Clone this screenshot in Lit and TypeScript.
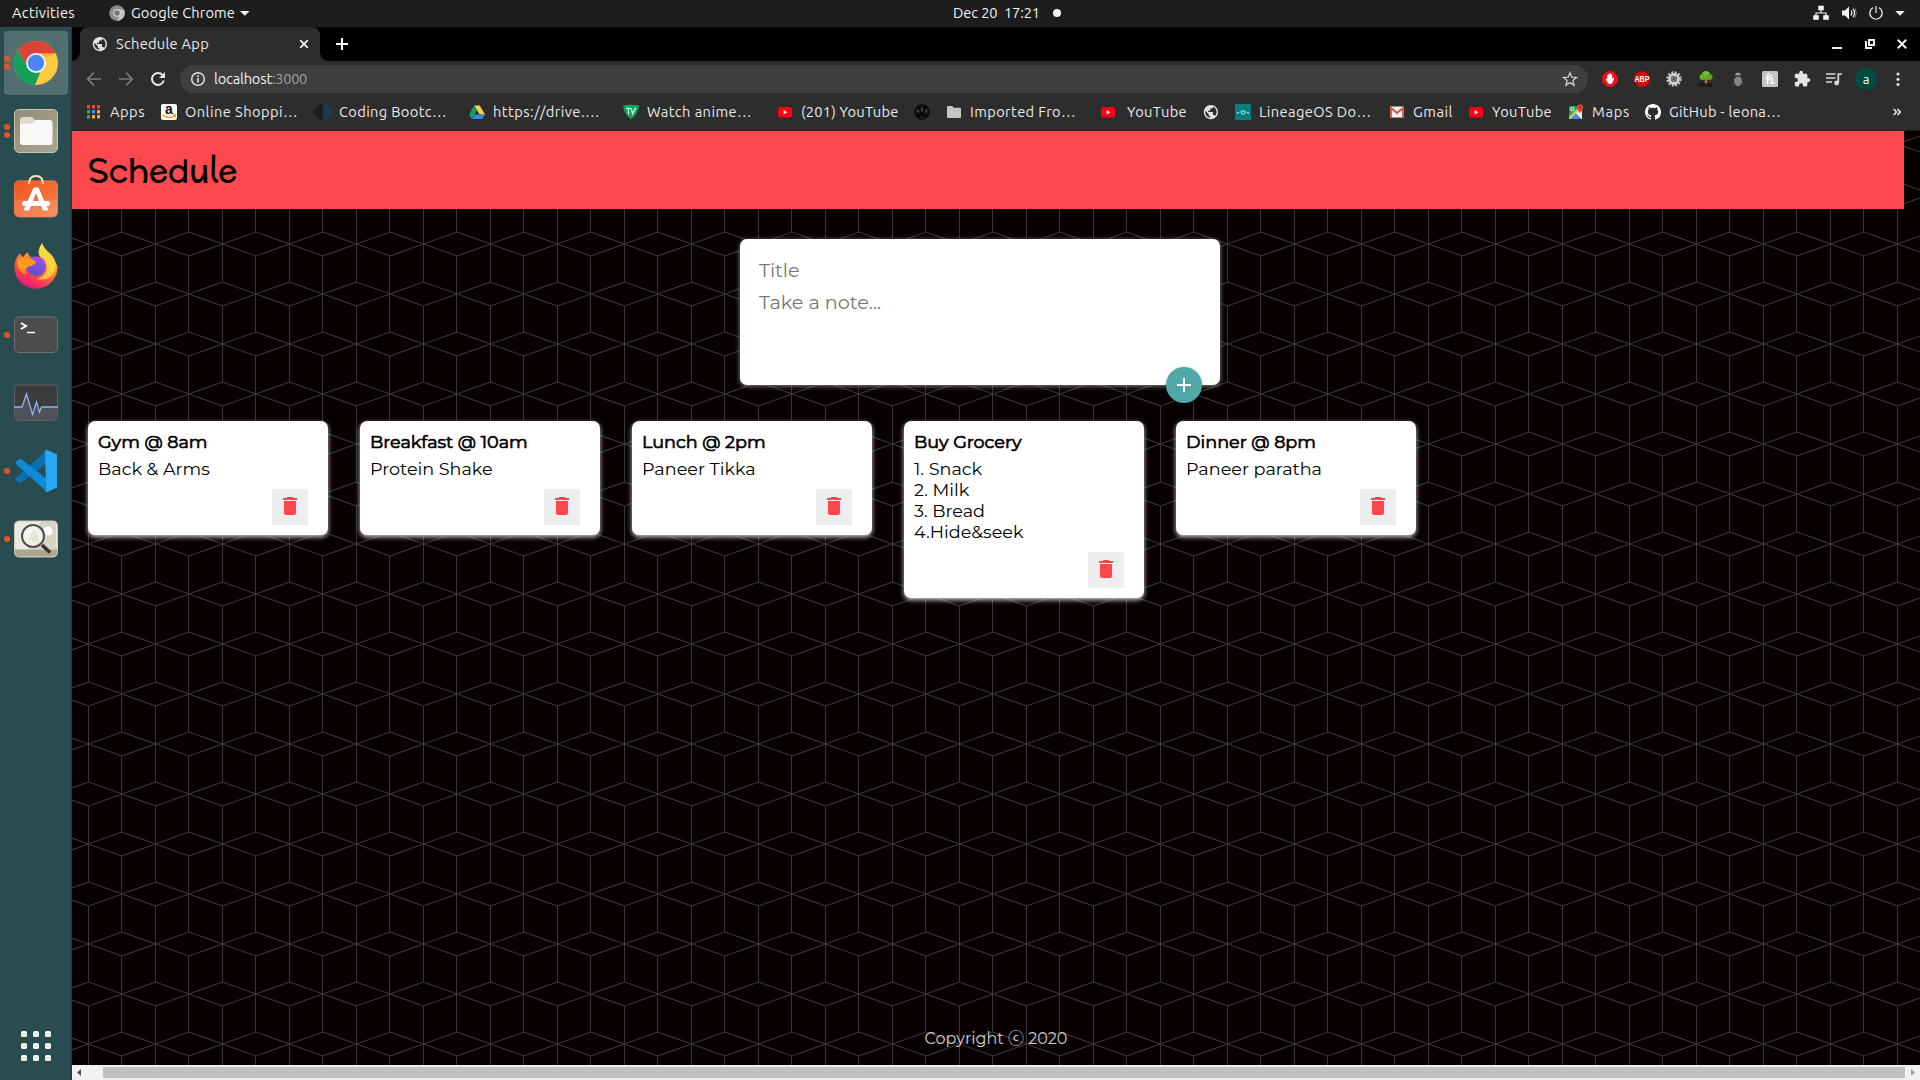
import { LitElement, html, svg, css } from "lit";
import { customElement, property, state } from "lit/decorators.js";

/** A single line of text whose tracking is adjusted to fill a given width. */
@customElement("fit-text")
class FitText extends LitElement {
  @property() text = "";
  @property({ type: Number }) w = 0;
  @state() private spacing = 0;

  static styles = css`
    :host { display: inline-block; white-space: pre; }
    .line { display: inline-block; }
  `;

  firstUpdated() {
    const line = this.renderRoot.querySelector(".line") as HTMLElement;
    const natural = line.getBoundingClientRect().width;
    if (natural && this.w) this.spacing = (this.w - natural) / this.text.length;
  }

  render() {
    return html`<span class="line" style="letter-spacing:${this.spacing}px">${this.text}</span>`;
  }
}

const fit = (text: string, w: number) => html`<fit-text .text=${text} .w=${w}></fit-text>`;

const icon = (size: number, box: string, body: unknown) =>
  html`<svg class="icon" width=${size} height=${size} viewBox=${box}>${body}</svg>`;

const GLOBE = svg`<path transform="translate(-.6 -.4) scale(.71)" fill="#e2e3e5" d="M12 2C6.480 2 2 6.480 2 12s4.480 10 10 10 10-4.480 10-10S17.520 2 12 2zm-1 17.930c-3.950-.49-7-3.850-7-7.930 0-.62.08-1.210.21-1.790L9 15v1c0 1.100.9 2 2 2v1.930zm6.900-2.540c-.26-.81-1-1.390-1.900-1.390h-1v-3c0-.55-.45-1-1-1H8v-2h2c.55 0 1-.45 1-1V7h2c1.100 0 2-.9 2-2v-.41c2.930 1.190 5 4.060 5 7.410 0 2.080-.8 3.970-2.100 5.390z"/>`;

const YT = svg`<rect x="1" y="3" width="14" height="10.500" rx="2.600" fill="#ff0018"/><path d="M6.600 6v4.400l3.700-2.200Z" fill="#fff"/>`;

const FAVICONS: Record<string, unknown> = {
  apps: svg`${[0, 1, 2].map(r => [0, 1, 2].map(c => svg`<rect x=${1 + c * 5} y=${1 + r * 5} width="3" height="3.500"
      fill=${[["#ea4335", "#ea4335", "#ea4335"], ["#34a853", "#2196f3", "#fbaa28"], ["#34a853", "#fbaa28", "#fbaa28"]][r][c]}/>`))}`,
  amazon: svg`<rect width="16" height="16" rx="2" fill="#fff"/><text x="8" y="10.300" text-anchor="middle" font-family="Liberation Sans" font-weight="700" font-size="14" fill="#111">a</text>
    <path d="M1.500 10.800c3.500 3.300 9 3.500 12 1M12 11l2.500-.3-.5 2.600" fill="none" stroke="#ff9d1e" stroke-width="1.400"/>`,
  coding: svg`<g fill="none" stroke-width="1.400"><g stroke="#171717"><path d="M8 .8a7.200 7.200 0 0 0 0 14.400M8 3a5 5 0 0 0 0 10M8 5.200a2.800 2.800 0 0 0 0 5.600"/></g>
    <g stroke="#17406b"><path d="M8.500 .8a7.200 7.200 0 0 1 0 14.400M8.500 3a5 5 0 0 1 0 10M8.500 5.200a2.800 2.800 0 0 1 0 5.600"/></g></g>`,
  drive: svg`<path d="M5.300 1.500h5.400L16 10.500h-5.300Z" fill="#ffcf48"/><path d="M5.300 1.500 8 6.100 2.700 15 0 10.500Z" fill="#12a05f"/><path d="M5.500 10.500H16L13.300 15H2.800Z" fill="#3b82f0"/>`,
  tv: svg`<path d="M0 1.600Q8-.2 16 1.600 15.200 10 8 15.500.8 10 0 1.600Z" fill="#0fa45c"/><path d="M3 4.300H8M5.500 4.500v6M8.200 4.300l1.500 5.500 3-6" stroke="#d8f8e6" stroke-width="1.200" fill="none"/>`,
  yt: YT,
  dark: svg`<circle cx="8" cy="8" r="7.700" fill="#0a0a0a"/><path d="M3.500 4.500q-2 2-1 4.500L4 8l.8 2.500L5.500 7ZM12.500 4.500q2 2 1 4.500L12 8l-.8 2.500L10.500 7ZM7.300 2.500h1.400l.8 3.500-.9 2H7.400l-.9-2ZM5.500 11.500 7 14h2l1.500-2.500L9 13H7Z" fill="#343434"/>`,
  folder: svg`<path d="M1 3q0-1 1-1h4.200l1.500 1.800H14q1 0 1 1V13q0 1-1 1H2q-1 0-1-1Z" fill="#c4c4c4"/>`,
  globe: GLOBE,
  lineage: svg`<rect width="16" height="16" fill="#087d7d"/><path d="M2.500 8.800 5 8q3-2.600 6 0l2.500.8" fill="none" stroke="#73bcbc"/><circle cx="8" cy="8.500" r="1.700" fill="#087d7d" stroke="#8fd0d0" stroke-width="1.200"/><circle cx="2.800" cy="9" r="1" fill="#8fd0d0"/><circle cx="13.200" cy="9" r="1" fill="#8fd0d0"/>`,
  gmail: svg`<rect x="1" y="2.500" width="14" height="11" rx="1" fill="#f2f2f2"/><path d="M2 13.500V4l6 5 6-5v9.500" fill="none" stroke="#dd4b3e" stroke-width="1.800"/>`,
  maps: svg`<rect x="1" y="2" width="13" height="13" rx="1" fill="#1ea362"/><path d="m6 11 6-6 2 2v8Z" fill="#e9e9e9"/><path d="M1 13 12 2l2 2L3 15H2q-1 0-1-1Z" fill="#ffd34d" opacity=".85"/><path d="m8.200 9 5.800 6H2.500Z" fill="#4a89f3"/><path d="m8.200 9 5.800 6" stroke="#fff" stroke-width=".8"/><circle cx="4.300" cy="5.200" r="1.600" fill="none" stroke="#fff"/><path d="M8.800 3.600a3.200 3.200 0 0 1 6.400 0C15.200 6 12.600 7 12 10c-.6-3-3.200-4-3.200-6.400Z" fill="#e8453c"/><circle cx="12" cy="3.600" r="1.100" fill="#8c1f1a"/>`,
  github: svg`<path fill="#fff" d="M8 0C3.580 0 0 3.580 0 8c0 3.540 2.290 6.530 5.470 7.590.4.070.55-.17.55-.38 0-.19-.01-.82-.01-1.490-2.010.37-2.530-.49-2.690-.94-.09-.23-.48-.94-.82-1.130-.28-.15-.68-.52-.01-.53.63-.01 1.080.58 1.230.82.72 1.210 1.870.87 2.330.66.070-.52.28-.87.51-1.070-1.780-.2-3.640-.89-3.640-3.950 0-.87.31-1.590.82-2.150-.08-.2-.36-1.020.08-2.120 0 0 .67-.21 2.200.82.64-.18 1.320-.27 2-.27s1.360.09 2 .27c1.530-1.040 2.200-.82 2.200-.82.44 1.100.16 1.920.08 2.120.51.56.82 1.270.82 2.150 0 3.070-1.870 3.750-3.650 3.950.29.25.54.73.54 1.480 0 1.070-.01 1.930-.01 2.200 0 .21.15.46.55.38A8.010 8.010 0 0 0 16 8c0-4.420-3.580-8-8-8Z"/>`,
};

/* favicon, label, label width, distance to the next bookmark, extra gap before the label */
const BOOKMARKS: [string, string, number, number, number?][] = [
  ["apps", "Apps", 35, 75],
  ["amazon", "Online Shoppi…", 113, 154],
  ["coding", "Coding Bootc…", 108, 154],
  ["drive", "https://drive.…", 107, 154],
  ["tv", "Watch anime…", 105, 154],
  ["yt", "(201) YouTube", 97.500, 137],
  ["dark", "", 0, 32],
  ["folder", "Imported Fro…", 106, 154],
  ["yt", "YouTube", 60, 103, 3],
  ["globe", "", 0, 32],
  ["lineage", "LineageOS Do…", 112.500, 154],
  ["gmail", "Gmail", 40, 79],
  ["yt", "YouTube", 60, 100],
  ["maps", "Maps", 38, 77],
  ["github", "GitHub - leona…", 112, 154],
];

const OCT = "M5 .3h6L15.700 5v6L11 15.700H5L.3 11V5Z";

const EXTENSIONS = [
  svg`<path d=${OCT} fill="#f50d1c"/><path d="M5 10.500 3.800 8q.6-.9 1.400.1V4.500q.6-1 1.200 0V3.300q.7-1 1.300 0V2.800q.7-.9 1.300 0v.9q.7-.9 1.200 0V8l.9-1.300q.8-.6 1.200.1L11 10.500Q10 13 8.200 13 6 13 5 10.500Z" fill="#fff"/>`,
  svg`<path d=${OCT} fill="#d9040f"/><text transform="translate(8 11.200) scale(.8 1)" text-anchor="middle" font-family="Liberation Sans" font-weight="700" font-size="9" fill="#fff">ABP</text>`,
  svg`<circle cx="8" cy="8" r="6.500" fill="none" stroke="#c9c9c9" stroke-width="2.400" stroke-dasharray="1.900 1.500"/><circle cx="8" cy="8" r="4.500" fill="none" stroke="#cfcfcf" stroke-width="2.800"/><circle cx="8" cy="8" r="2.400" fill="#666" stroke="#8c8c8c"/>`,
  svg`<path d="M7 7h2l.6 6H6.400Z" fill="#a9672a"/><circle cx="8" cy="4.200" r="4.200" fill="#6cc32b"/><circle cx="4.500" cy="6" r="3" fill="#5db424"/><circle cx="11.500" cy="6" r="3" fill="#57a922"/><path d="M7.600 4h1v8h-1Z" fill="#c07a2a"/><text transform="translate(8 16) scale(1 1)" text-anchor="middle" font-family="Liberation Sans" font-weight="700" font-size="5.500" fill="#100808">HTML</text>`,
  svg`<path d="m2 7 3 1.500M1.500 11H5m-3 4 3-2M14 7l-3 1.500M14.500 11H11m3 4-3-2" stroke="#454545" stroke-width="1"/><ellipse cx="8" cy="10.300" rx="3.800" ry="5" fill="#858585"/><path d="M5 4.300Q5.500 1.500 8 1.500t3 2.800Z" fill="#9a9a9a"/><path d="M4.500 5h7" stroke="#444"/>`,
  svg`<rect width="16" height="16" rx="1.500" fill="#c4c4c6"/><path d="M5.500 13V5.500q0-2.500 1.700-2.500M4 6.800q3 0 5.500-2.300M5.500 10Q8 6.800 9.500 7.500t-.3 3.300q-.3 1.700.8 1.700t1.800-1.500" fill="none" stroke="#fff" stroke-width="1.400" stroke-linecap="round"/>`,
  svg`<path transform="translate(-.7 -.9) scale(.74)" fill="#e2e3e5" d="M20.500 11H19V7c0-1.100-.9-2-2-2h-4V3.500a2.500 2.500 0 0 0-5 0V5H4c-1.100 0-2 .9-2 2v3.800h1.500a2.700 2.700 0 0 1 0 5.400H2V20c0 1.100.9 2 2 2h3.800v-1.500a2.700 2.700 0 0 1 5.400 0V22H17c1.100 0 2-.9 2-2v-4h1.500a2.500 2.500 0 0 0 0-5Z"/>`,
  svg`<path d="M0 3h9.500M0 7h9.500M0 11h6" stroke="#d9dadc" stroke-width="1.700"/><path d="M12.300 12V3H16" fill="none" stroke="#d9dadc" stroke-width="1.700"/><circle cx="10.600" cy="12" r="2.400" fill="#d9dadc"/>`,
];

const DOCK: { dots: number; active?: boolean; art: unknown }[] = [
  {
    dots: 2, active: true,
    art: svg`<circle cx="22" cy="22" r="22" fill="#fdc93f"/>
      <path d="M22 0a22 22 0 0 1 19.800 12.500H22L13.800 27 3.800 9.500A22 22 0 0 1 22 0Z" fill="#dc4437"/>
      <path d="M3.800 9.500 14 27l12 5-5 12A22 22 0 0 1 3.800 9.500Z" fill="#159f5b"/>
      <path d="M22 12.500h19.800l-10 3.500Z" fill="#e9a52c" opacity=".6"/>
      <circle cx="22" cy="22" r="10" fill="#f1f4f8"/><circle cx="22" cy="22" r="8.200" fill="#4687f4"/>`,
  },
  {
    dots: 2,
    art: svg`<rect x=".5" y=".5" width="43" height="43" rx="4.500" fill="url(#sand)" stroke="#c9c3b1"/>
      <path d="M6 11q0-3 3-3h8q2 0 3 2l1.500 2H36v10H6Z" fill="#dedacb"/>
      <path d="M6 17q0-2.500 2.500-2.500H18L21.500 11H36q2.500 0 2.500 2.500V33q0 3-3 3H9q-3 0-3-3Z" fill="#f9f8f7"/>`,
  },
  {
    dots: 0,
    art: svg`<g transform="translate(0 -.6)"><rect x=".5" y="4.500" width="43" height="36" rx="4.500" fill="url(#orange)" stroke="#ef7a45"/>
      <path d="M1 23h42v13q0 4-4 4H5q-4 0-4-4Z" fill="#fff" opacity=".12"/>
      <path d="M15 7.500Q15-.5 22-.5t7 8" fill="none" stroke="#f7dfae" stroke-width="2"/>
      <path d="M19.500 11h5L34.500 34H29l-7-17-7 17H9.500Z" fill="#fff"/><rect x="8" y="24.500" width="28" height="5" rx="2.500" fill="#fff"/></g>`,
  },
  {
    dots: 0,
    art: svg`<g transform="translate(0 -1.800)"><path d="M6 10q1 3 3 4 3-4 5-5 0 4 3 5l9 0q-2-9 2-14 2 5 7 10t8.500 13A21.500 21.500 0 0 1 22 45.500 21.500 21.500 0 0 1 .5 24Q.5 16 6 10Z" fill="url(#fox)"/>
      <path d="M28 0q-5 6-3 12 8 4 8 13-1 8-10 11 14 2 18-9 3-10-5-17Q30 6 28 0Z" fill="#ffe14a" opacity=".75"/>
      <circle cx="22" cy="23" r="10" fill="url(#violet)"/>
      <path d="M3 18q5-6 10-2 5-2 9 3-1 3-7 4-6 3-3 8-8-2-9-13Z" fill="#ff9b1c"/></g>`,
  },
  {
    dots: 1,
    art: svg`<rect x=".5" y="4" width="43" height="35.500" rx="4.500" fill="#4c4c4c" stroke="#707070"/>
      <path d="m7 10 5 3-5 3" fill="none" stroke="#fff" stroke-width="2"/><path d="M13 19.500h8" stroke="#fff" stroke-width="1.500"/>`,
  },
  {
    dots: 0,
    art: svg`<rect x=".5" y="4" width="43" height="35.500" rx="4.500" fill="#3c3c3c" stroke="#626262"/>
      <path d="M1 26h7l4-13 6 20 4-12 3 9 2-4h16v9q0 4-4 4H5q-4 0-4-4Z" fill="#585a68" opacity=".7"/>
      <path d="M0 26h8l4.500-13 6 20.500 4-12.500 3 10 2-5H44" fill="none" stroke="#8fb2f2" stroke-width="1.300"/>`,
  },
  {
    dots: 1,
    art: svg`<path d="M33 1 2 29q-1 1 0 2l3 2.600q1 1 2.500 0L33 14Z" fill="#0d70b5"/>
      <path d="M33 43 2 15q-1-1 0-2l3-2.600q1-1 2.500 0L33 30Z" fill="#0d8bd9"/>
      <path d="M31 1.500 33 1l10 4.500V38.500L33 43l-2-.5 1-1Z" fill="#27a7f2"/>`,
  },
  {
    dots: 1,
    art: svg`<g transform="translate(0 -.5)"><rect x=".5" y="4.500" width="43" height="36" rx="4.500" fill="#eceae0" stroke="#c9c6b8"/>
      <path d="M27 5 42 5v28H14Z" fill="#d7d4c6"/><path d="M1 33h42v3q0 4-4 4H5q-4 0-4-4Z" fill="#aaa692"/>
      <circle cx="34" cy="14.500" r="4.500" fill="#fff"/>
      <circle cx="19" cy="19.500" r="11" fill="#f7f7f3" fill-opacity=".8" stroke="#4d4d4d" stroke-width="2"/>
      <path d="M13 25 20 12l6 13Z" fill="#deddd3" opacity=".6"/>
      <path d="m28 28.500 8 7.500" stroke="#343434" stroke-width="3.600"/></g>`,
  },
];

const NOTES = [
  { title: "Gym @ 8am", lines: ["Back & Arms"] },
  { title: "Breakfast @ 10am", lines: ["Protein Shake"] },
  { title: "Lunch @ 2pm", lines: ["Paneer Tikka"] },
  { title: "Buy Grocery", lines: ["1. Snack", "2. Milk", "3. Bread", "4.Hide&seek"] },
  { title: "Dinner @ 8pm", lines: ["Paneer paratha"] },
];

@customElement("app-root")
class AppRoot extends LitElement {
  static styles = css`
    :host {
      display: grid;
      grid-template: 27px 1053px / 72px 1848px;
      width: 1920px;
      height: 1080px;
      overflow: hidden;
      background: #000;
      font: 14.667px/20px "Ubuntu", "Noto Sans", sans-serif;
      color: #e8e8e8;
    }
    * { box-sizing: border-box; }
    .icon { display: block; flex: none; overflow: visible; }

    .topbar {
      grid-column: 1 / -1;
      display: grid;
      grid-template-columns: 953px 1fr auto;
      align-items: center;
      background: #1d1d1d;
      color: #f2f2f2;
    }
    .topbar > div { display: flex; align-items: center; height: 27px; padding-bottom: 1px; }
    .topbar .topleft { padding-left: 12px; }
    .chrome-mark { margin: 0 6px 0 34px; }
    .caret { margin-left: 5px; }
    .dot { width: 8px; height: 8px; border-radius: 50%; background: #f4f4f4; margin-left: 13px; }
    .topbar .tray { gap: 12px; padding-right: 15px; }

    .dock {
      display: flex;
      flex-direction: column;
      gap: 4px;
      padding: 4px 4px 15px;
      background: #294c50;
      border-right: 1px solid #1d3d41;
    }
    .slot {
      position: relative;
      display: grid;
      place-items: center;
      width: 64px;
      height: 64px;
      border-radius: 4px;
    }
    .slot.active { background: #546f72; }
    .pips {
      position: absolute;
      left: 0;
      top: 0;
      height: 64px;
      display: flex;
      flex-direction: column;
      justify-content: center;
      gap: 2.500px;
    }
    .pip { width: 6px; height: 6px; border-radius: 50%; background: #ea5420; }
    .all-apps {
      display: grid;
      grid-template-columns: repeat(3, 6px);
      gap: 6px;
      margin: auto 0 4px 17px;
    }
    .all-apps i { height: 6px; border-radius: 1.500px; background: #f1f1ee; }

    .window { display: grid; grid-template-rows: 34px 37px 33px 934px 15px; }
    .tabs { display: flex; align-items: center; padding-left: 8px; background: #000; }
    .tab {
      display: flex;
      align-items: center;
      width: 240px;
      height: 34px;
      padding: 0 11px 0 12px;
      border-radius: 8px 8px 0 0;
      background: #2d2d2d;
      position: relative;
    }
    .tab::before, .tab::after {
      content: "";
      position: absolute;
      bottom: 0;
      width: 8px;
      height: 8px;
    }
    .tab::before { left: -8px; background: radial-gradient(circle at 0 0, #000 7.500px, #2d2d2d 8px); }
    .tab::after { right: -8px; background: radial-gradient(circle at 100% 0, #000 7.500px, #2d2d2d 8px); }
    .tab-title { flex: 1; padding-left: 8px; }
    .new-tab { margin-left: 15px; }
    .controls { display: flex; align-items: center; gap: 20.500px; margin-left: auto; padding-right: 12px; }

    .toolbar { display: flex; align-items: center; background: #2d2d2d; padding: 0 0 1px 14px; }
    .nav { display: flex; gap: 16px; width: 94px; }
    .address {
      display: flex;
      align-items: center;
      width: 1408px;
      height: 28px;
      padding: 0 10px;
      border-radius: 14px;
      background: #3e3e3e;
    }
    .address .host { margin-left: 8px; color: #f1f1f1; }
    .address .port { color: #9d9d9d; }
    .star { margin-left: auto; }
    .exts { display: flex; align-items: center; gap: 16px; padding-left: 14px; }
    .avatar {
      display: grid;
      place-items: center;
      width: 22px;
      height: 22px;
      margin: 0 -3px;
      border-radius: 50%;
      background: #004d40;
      color: #fff;
      font-size: 13px;
      line-height: 20px;
    }

    .bookmarks {
      display: flex;
      align-items: center;
      padding: 0 19px 4px 14px;
      border-bottom: 1px solid #202020;
      background: #2d2d2d;
      white-space: nowrap;
    }
    .bookmark { display: flex; align-items: center; gap: 8px; height: 20px; flex: none; }
    .more { margin-left: auto; }

    .page {
      position: relative;
      display: flex;
      flex-direction: column;
      background: #080000;
      font-family: "Montserrat", "Inter", "Noto Sans CJK JP", sans-serif;
      color: #000;
    }
    .backdrop { position: absolute; left: 0; top: 0; }
    .banner {
      position: relative;
      width: 1832px;
      height: 78px;
      padding: 0 16px;
      background: #ff484d;
    }
    .banner h1 {
      margin: 0;
      font: 400 32px/78px "McLaren", "Lato", sans-serif;
    }
    .composer {
      position: relative;
      width: 480px;
      height: 146px;
      margin: 30px 0 36px 668px;
      padding: 15px 19px;
      border-radius: 7px;
      background: #fff;
      box-shadow: 0 1px 5px rgb(138, 137, 137);
      font-size: 19.200px;
      line-height: 32px;
      color: #757575;
    }
    .composer .field { display: block; height: 32px; }
    .add {
      position: absolute;
      right: 18px;
      bottom: -18px;
      display: grid;
      place-items: center;
      width: 36px;
      height: 36px;
      border-radius: 50%;
      background: #51a8a9;
      box-shadow: 0 1px 3px rgba(0, 0, 0, 0.3);
    }
    .notes {
      position: relative;
      display: flex;
      align-items: flex-start;
      gap: 32px;
      padding-left: 16px;
    }
    .note {
      width: 240px;
      padding: 10px;
      border-radius: 7px;
      background: #fff;
      box-shadow: 0 2px 5px #ccc;
      font-size: 17.600px;
      line-height: 21px;
    }
    .note h2 {
      margin: 0 0 6px;
      height: 21px;
      font-size: 17.600px;
      font-weight: 400;
      line-height: 21px;
      -webkit-text-stroke: 0.700px #000;
    }
    .note .line { display: block; height: 21px; }
    .trash {
      display: grid;
      justify-content: center;
      width: 36px;
      height: 36px;
      padding-top: 5px;
      margin: 10px 10px 0 auto;
      background: #eee;
    }
    footer {
      position: relative;
      margin-top: auto;
      padding-bottom: 15px;
      text-align: center;
      font-size: 16px;
      line-height: 22px;
      color: #ccc;
    }

    .scrollbar {
      display: grid;
      grid-template-columns: 31px 1802px 15px;
      align-items: center;
      background: #f1f1f1;
    }
    .scrollbar .thumb { height: 11px; background: #c1c1c1; }
  `;

  private renderTopbar() {
    return html`<div class="topbar">
      <div class="topleft">
        ${fit("Activities", 63)}
        <span class="chrome-mark">${icon(16, "0 0 16 16", svg`<circle cx="8" cy="8" r="7.800" fill="#8b8b8b"/><path d="M8 4.500h7A7.800 7.800 0 0 1 8 15.800l3.200-6Z" fill="#c4c4c4"/><circle cx="8" cy="8" r="3.700" fill="#ddd"/><circle cx="8" cy="8" r="2.800" fill="#777"/>`)}</span>
        ${fit("Google Chrome", 104)}
        <span class="caret">${icon(10, "0 0 10 10", svg`<path d="M0 3h9.600L4.800 7.800Z" fill="#f2f2f2"/>`)}</span>
      </div>
      <div>${fit("Dec 20  17:21", 87)}<span class="dot"></span></div>
      <div class="tray">
        ${icon(16, "0 0 16 16", svg`<path d="M5.500 1h5v4h-5ZM.5 10.500h5V14.500h-5ZM10.500 10.500h5V14.500h-5Z" fill="#f2f2f2" stroke="#f2f2f2" stroke-width=".6" stroke-linejoin="round"/><path d="M8 5v3M3 11V8h10v3" fill="none" stroke="#f2f2f2" stroke-width="1.200"/>`)}
        ${icon(16, "0 0 16 16", svg`<path d="M1 5.500h3L8 1.500v13L4 10.500H1Z" fill="#f2f2f2"/><path d="M10 5.500q1.800 2.500 0 5M12 3.800q3 4.200 0 8.400" fill="none" stroke="#f2f2f2" stroke-width="1.200"/><path d="M13.800 3q3 5 0 10" fill="none" stroke="#999" stroke-width=".8"/>`)}
        ${icon(14, "0 0 14 14", svg`<path d="M4 1.600a6.200 6.200 0 1 0 6 0M7 0v7" fill="none" stroke="#f2f2f2" stroke-width="1.200"/>`)}
        ${icon(10, "0 0 10 10", svg`<path d="M.3 3h9.400L5 7.800Z" fill="#f2f2f2"/>`)}
      </div>
    </div>`;
  }

  private renderDock() {
    return html`<div class="dock">
      ${DOCK.map(d => html`<div class="slot ${d.active ? "active" : ""}">
        <div class="pips">${Array.from({ length: d.dots }, () => html`<i class="pip"></i>`)}</div>
        ${icon(44, "0 0 44 44", svg`<defs>
          <linearGradient id="sand" x2="1" y2="1"><stop stop-color="#938b76"/><stop offset="1" stop-color="#aba48e"/></linearGradient>
          <linearGradient id="orange" x2="1" y2="1"><stop stop-color="#f2541b"/><stop offset="1" stop-color="#f4814f"/></linearGradient>
          <linearGradient id="fox" x1=".8" y1="0" x2=".3" y2="1"><stop stop-color="#ffe040"/><stop offset=".45" stop-color="#ff8f22"/><stop offset=".75" stop-color="#ff3f4d"/><stop offset="1" stop-color="#e3128b"/></linearGradient>
          <linearGradient id="violet" x1=".7" y1="0" x2=".4" y2="1"><stop stop-color="#a14cf0"/><stop offset="1" stop-color="#5b53c9"/></linearGradient>
        </defs>${d.art}`)}
      </div>`)}
      <div class="all-apps">${Array.from({ length: 9 }, () => html`<i></i>`)}</div>
    </div>`;
  }

  private renderChrome() {
    return html`
      <div class="tabs">
        <div class="tab">
          ${icon(16, "0 0 16 16", GLOBE)}
          <span class="tab-title">${fit("Schedule App", 93)}</span>
          ${icon(10, "0 0 10 10", svg`<path d="m1.200 1.200 7.600 7.600m0-7.600L1.200 8.800" stroke="#f2f2f2" stroke-width="1.800"/>`)}
        </div>
        <span class="new-tab">${icon(14, "0 0 14 14", svg`<path d="M7 1v12M1 7h12" stroke="#fff" stroke-width="2"/>`)}</span>
        <div class="controls">
          ${icon(12, "0 0 12 12", svg`<path d="M1 10h10" stroke="#eee" stroke-width="2"/>`)}
          ${icon(12, "0 0 12 12", svg`<path d="M5 2h5v5H5ZM2 3v7h6" fill="none" stroke="#eee" stroke-width="2"/>`)}
          ${icon(12, "0 0 12 12", svg`<path d="m1.800 1.800 8.400 8.400m0-8.400-8.400 8.400" stroke="#eee" stroke-width="2"/>`)}
        </div>
      </div>
      <div class="toolbar">
        <div class="nav">
          ${icon(16, "0 0 16 16", svg`<path d="M15 8H2M8 1.500 1.700 8 8 14.500" fill="none" stroke="#7b7b7b" stroke-width="1.700"/>`)}
          ${icon(16, "0 0 16 16", svg`<path d="M1 8h13M8 1.500 14.300 8 8 14.500" fill="none" stroke="#7b7b7b" stroke-width="1.700"/>`)}
          ${icon(16, "0 0 16 16", svg`<path d="M13.800 9.500A6 6 0 1 1 12.500 3.900" fill="none" stroke="#e6e6e6" stroke-width="2"/><path d="M15 1v6H9Z" fill="#e6e6e6"/>`)}
        </div>
        <div class="address">
          ${icon(16, "0 0 16 16", svg`<circle cx="8" cy="8" r="6.300" fill="none" stroke="#e0e0e0" stroke-width="1.500"/><path d="M8 7v4.500M8 4.300V6" stroke="#e0e0e0" stroke-width="1.700"/>`)}
          <span class="host">${fit("localhost", 58)}</span><span class="port">${fit(":3000", 35)}</span>
          <span class="star">${icon(16, "0 0 24 24", svg`<path d="m12 2.500 2.700 6.700 7.100.5-5.500 4.600 1.800 7L12 17.400l-6.100 3.900 1.800-7-5.500-4.600 7.100-.5Z" fill="none" stroke="#c9c9c9" stroke-width="2"/>`)}</span>
        </div>
        <div class="exts">
          ${EXTENSIONS.map(e => icon(16, "0 0 16 16", e))}
          <span class="avatar">a</span>
          ${icon(16, "0 0 16 16", svg`<g fill="#dedede"><circle cx="8" cy="3" r="1.600"/><circle cx="8" cy="8.300" r="1.600"/><circle cx="8" cy="13.500" r="1.600"/></g>`)}
        </div>
      </div>
      <div class="bookmarks">
        ${BOOKMARKS.map(([fav, label, w, pitch, lead = 0]) => html`<div class="bookmark" style="width:${pitch}px;column-gap:${8 + lead}px">
          ${icon(16, "0 0 16 16", FAVICONS[fav])}${label ? fit(label, w) : ""}
        </div>`)}
        <span class="more">${icon(8, "0 0 8 8", svg`<path d="m.8 1 2.700 3L.8 7m3.700-6 2.700 3-2.700 3" fill="none" stroke="#e8e8e8" stroke-width="1.600"/>`)}</span>
      </div>`;
  }

  private renderPage() {
    return html`<div class="page">
      <svg class="backdrop" width="1848" height="934">
        <defs>
          <pattern id="cubes" width="67" height="100" patternUnits="userSpaceOnUse">
            <g fill="none" stroke="#3b3636" stroke-width="1.050">
              <path d="M-50.500 13-17 1 16.500 13 50 1 83.500 13 50 25 16.500 13-17 25ZM-17 63 16.500 51 50 63 83.500 51 117 63 83.500 75 50 63 16.500 75Z"/>
              <path stroke-width="1" d="M49.500 25V101M49.500-1V1M16.500 75V101M16.500-1V51"/>
            </g>
          </pattern>
        </defs>
        <rect width="1848" height="934" fill="url(#cubes)"/>
      </svg>
      <header class="banner"><h1>Schedule</h1></header>
      <div class="composer">
        <span class="field">Title</span>
        <span class="field">Take a note...</span>
        <span class="add">${icon(24, "0 0 24 24", svg`<path d="M19 13h-6v6h-2v-6H5v-2h6V5h2v6h6v2z" fill="#fff"/>`)}</span>
      </div>
      <div class="notes">
        ${NOTES.map(n => html`<div class="note">
          <h2>${n.title}</h2>
          ${n.lines.map(t => html`<span class="line">${t}</span>`)}
          <div class="trash">${icon(24, "0 0 24 24", svg`<path d="M6 19c0 1.100.9 2 2 2h8c1.100 0 2-.9 2-2V7H6v12zM19 4h-3.500l-1-1h-5l-1 1H5v2h14V4z" fill="#ff484d"/>`)}</div>
        </div>`)}
      </div>
      <footer>Copyright ⓒ 2020</footer>
    </div>
    <div class="scrollbar">
      ${icon(15, "0 0 15 15", svg`<path d="M9 4v7L5 7.500Z" fill="#505050"/>`)}
      <div class="thumb"></div>
      ${icon(15, "0 0 15 15", svg`<path d="M6 4v7l4-3.500Z" fill="#a3a3a3"/>`)}
    </div>`;
  }

  render() {
    return html`${this.renderTopbar()}${this.renderDock()}
      <div class="window">${this.renderChrome()}${this.renderPage()}</div>`;
  }
}
